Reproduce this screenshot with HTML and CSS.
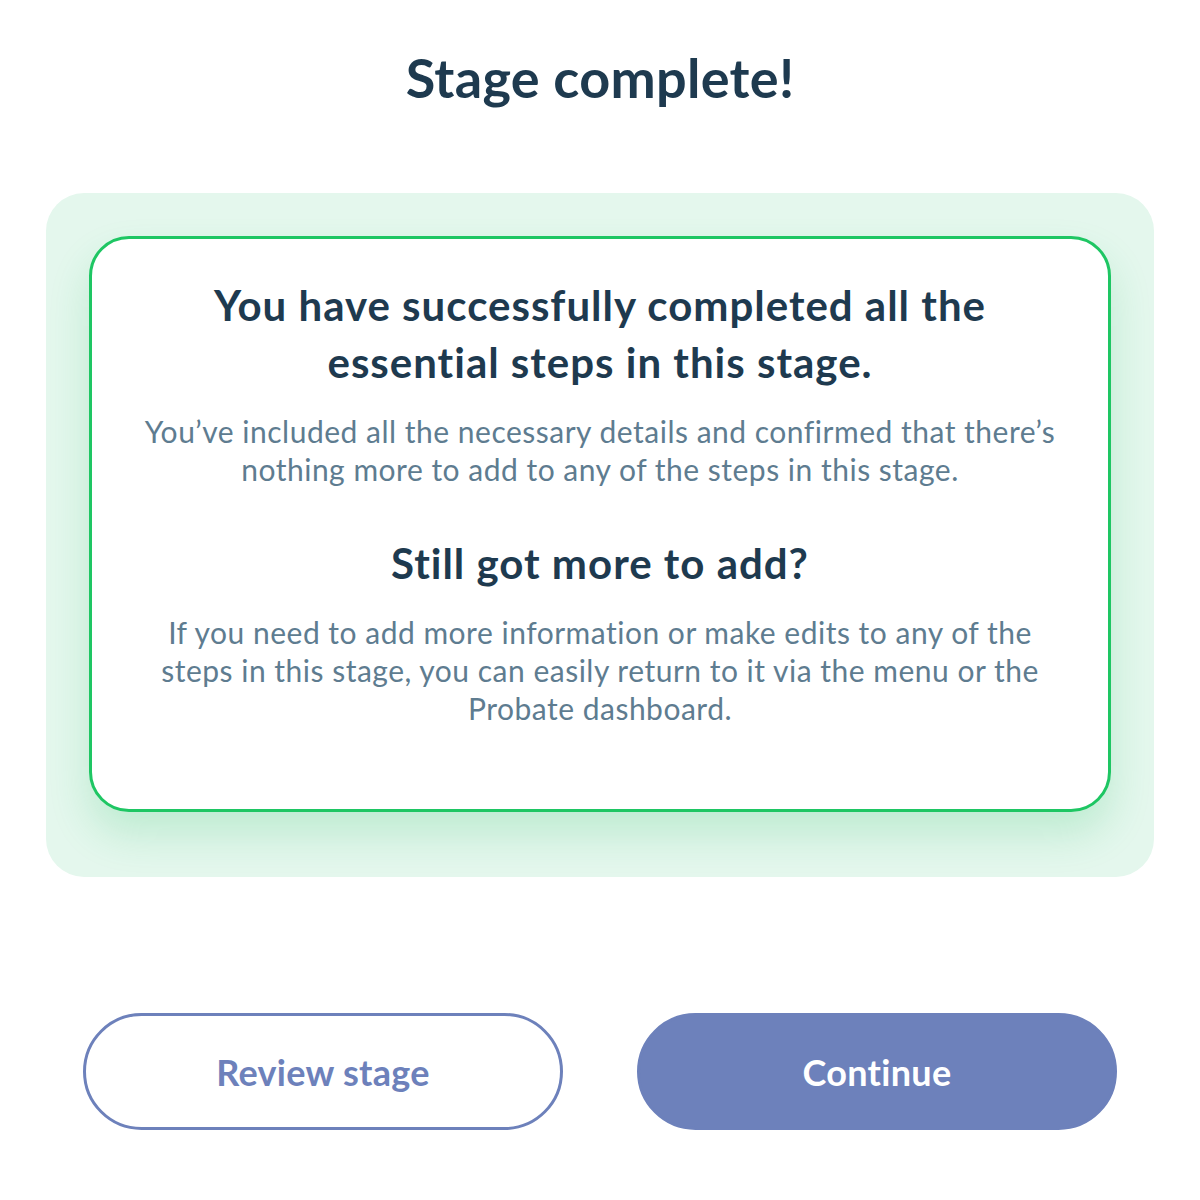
FILE: index.html
```html
<!DOCTYPE html>
<html lang="en">
<head>
  <meta charset="UTF-8">
  <meta name="viewport" content="width=device-width, initial-scale=1.0">
  <title>Stage complete</title>
  <link rel="stylesheet" href="styles.css">
</head>
<body>
  <div class="page">
    <h1 class="page-title">Stage complete!</h1>

    <div class="panel">
      <div class="card">
        <h2 class="card-heading">You have successfully completed all the<br>essential steps in this stage.</h2>
        <p class="card-text">You’ve included all the necessary details and confirmed that there’s<br>nothing more to add to any of the steps in this stage.</p>
        <h3 class="card-subheading">Still got more to add?</h3>
        <p class="card-text">If you need to add more information or make edits to any of the<br>steps in this stage, you can easily return to it via the menu or the<br>Probate dashboard.</p>
      </div>
    </div>

    <div class="actions">
      <button class="btn btn-outline">Review stage</button>
      <button class="btn btn-solid">Continue</button>
    </div>
  </div>
</body>
</html>
```

FILE: styles.css
```css
body {
  margin: 0;
  background: #fff;
  font-family: "Lato", "Noto Sans", sans-serif;
}

.page {
  width: 1200px;
  padding-top: 48px;
}

.page-title {
  margin: 0;
  text-align: center;
  font-size: 54px;
  line-height: 60px;
  letter-spacing: 0.3px;
  font-weight: 700;
  color: #1e3a4f;
}

.panel {
  margin: 85px 46px 0;
  padding: 43px 43px 65px;
  background: #e4f7ed;
  border-radius: 38px;
}

.card {
  background: #fff;
  border: 3px solid #1ec663;
  border-radius: 40px;
  padding: 38px 20px 82px;
  text-align: center;
  box-shadow: 0 22px 40px rgba(40, 190, 100, 0.2);
}

.card-heading {
  margin: 0;
  font-size: 42px;
  line-height: 57px;
  letter-spacing: 1px;
  font-weight: 700;
  color: #1e3a4f;
}

.card-text {
  margin: 21px 0 0;
  font-size: 30px;
  line-height: 38px;
  letter-spacing: 0.5px;
  color: #5e7c90;
}

.card-subheading {
  margin: 50px 0 0;
  font-size: 42px;
  line-height: 50px;
  letter-spacing: 1px;
  font-weight: 700;
  color: #1e3a4f;
}

.card-subheading + .card-text {
  margin-top: 25px;
}

.actions {
  display: flex;
  gap: 74px;
  padding: 0 83px;
  margin-top: 136px;
}

.btn {
  flex: 1;
  height: 117px;
  border-radius: 59px;
  font-family: inherit;
  font-size: 36px;
  letter-spacing: 0.3px;
  font-weight: 700;
  cursor: pointer;
}

.btn-outline {
  background: #fff;
  border: 3px solid #6d81bb;
  color: #6d81bb;
}

.btn-solid {
  background: #6d81bb;
  border: 3px solid #6d81bb;
  color: #fff;
}
```
